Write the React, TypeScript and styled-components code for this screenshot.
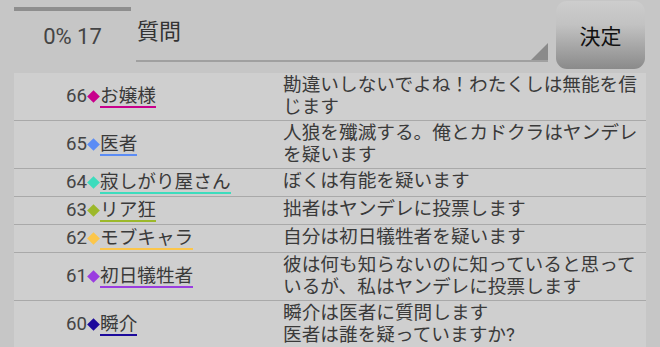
import React from "react";
import styled, { createGlobalStyle } from "styled-components";

const Global = createGlobalStyle`
  html, body { margin: 0; padding: 0; background: #c6c6c6; }
  body { font-family: "Roboto", "Noto Sans CJK JP", sans-serif; }
`;

const Page = styled.div`
  width: 660px;
  height: 347px;
  overflow: hidden;
  background: #c6c6c6;
  font-family: "Roboto", "Noto Sans CJK JP", sans-serif;
  color: #3a3a3a;
`;

const Header = styled.div`
  display: flex;
  align-items: flex-start;
  height: 73px;
  padding: 0 14px;
  box-sizing: border-box;
`;

const Status = styled.div`
  width: 117px;
  display: flex;
  flex-direction: column;
  align-items: stretch;
`;

const Progress = styled.div`
  margin-top: 7px;
  height: 4px;
  background: #8e8e8e;
`;

const Count = styled.div`
  margin-top: 13px;
  font-size: 22px;
  line-height: 26px;
  text-align: center;
  color: #444;
`;

const Question = styled.div`
  position: relative;
  margin-left: 5px;
  width: 412px;
  height: 62px;
  box-sizing: border-box;
  border-bottom: 2px solid #a0a0a0;
  font-size: 22px;
  line-height: 28px;
  padding-top: 18px;
  padding-left: 1px;
  color: #333;
  &::after {
    content: "";
    position: absolute;
    right: 0;
    bottom: 0;
    width: 17px;
    height: 17px;
    background: #8a8a8a;
    clip-path: polygon(100% 0, 100% 100%, 0 100%);
  }
`;

const Decide = styled.button`
  margin-left: 8px;
  margin-top: 1px;
  width: 89px;
  height: 68px;
  border: none;
  border-radius: 11px;
  background: linear-gradient(to bottom, #cdcdcd 0%, #c2c2c2 35%, #8a8a8a 100%);
  font-family: "Noto Sans CJK JP", sans-serif;
  font-size: 21px;
  color: #111;
  padding: 0;
`;

const Table = styled.div`
  margin: 0 14px;
  background: #cfcfcf;
`;

const Row = styled.div`
  display: grid;
  grid-template-columns: 269px 1fr;
  border-bottom: 1px solid #a9a9a9;
  font-size: 18.67px;
  line-height: 22px;
  padding: 1px 0 2px;
`;

const Speaker = styled.div`
  display: flex;
  align-items: center;
  padding-left: 52px;
`;

const Num = styled.span`
  color: #444;
`;

const Diamond = styled.span<{ $c: string }>`
  display: inline-block;
  width: 9px;
  height: 9px;
  margin: 0 2px;
  background: ${(p) => p.$c};
  transform: rotate(45deg);
`;

const Name = styled.span<{ $c: string }>`
  display: inline-block;
  line-height: 20px;
  margin-top: 2px;
  border-bottom: 2px solid ${(p) => p.$c};
  color: #3a3a3a;
`;

const Message = styled.div`
  color: #3a3a3a;
  padding-right: 6px;
`;

type Item = { n: number; name: string; color: string; text: React.ReactNode };

const items: Item[] = [
  { n: 66, name: "お嬢様", color: "#c8008c", text: "勘違いしないでよね！わたくしは無能を信じます" },
  { n: 65, name: "医者", color: "#5b8cf5", text: "人狼を殲滅する。俺とカドクラはヤンデレを疑います" },
  { n: 64, name: "寂しがり屋さん", color: "#3ddcbd", text: "ぼくは有能を疑います" },
  { n: 63, name: "リア狂", color: "#9cb82a", text: "拙者はヤンデレに投票します" },
  { n: 62, name: "モブキャラ", color: "#fcc64a", text: "自分は初日犠牲者を疑います" },
  { n: 61, name: "初日犠牲者", color: "#9a3de0", text: "彼は何も知らないのに知っていると思っているが、私はヤンデレに投票します" },
  {
    n: 60,
    name: "瞬介",
    color: "#1c0a9c",
    text: (
      <>
        瞬介は医者に質問します
        <br />
        医者は誰を疑っていますか?
      </>
    ),
  },
];

export default function App() {
  return (
    <Page>
      <Global />
      <Header>
        <Status>
          <Progress />
          <Count>0% 17</Count>
        </Status>
        <Question>質問</Question>
        <Decide>決定</Decide>
      </Header>
      <Table>
        {items.map((it) => (
          <Row key={it.n}>
            <Speaker>
              <Num>{it.n}</Num>
              <Diamond $c={it.color} />
              <Name $c={it.color}>{it.name}</Name>
            </Speaker>
            <Message>{it.text}</Message>
          </Row>
        ))}
      </Table>
    </Page>
  );
}
